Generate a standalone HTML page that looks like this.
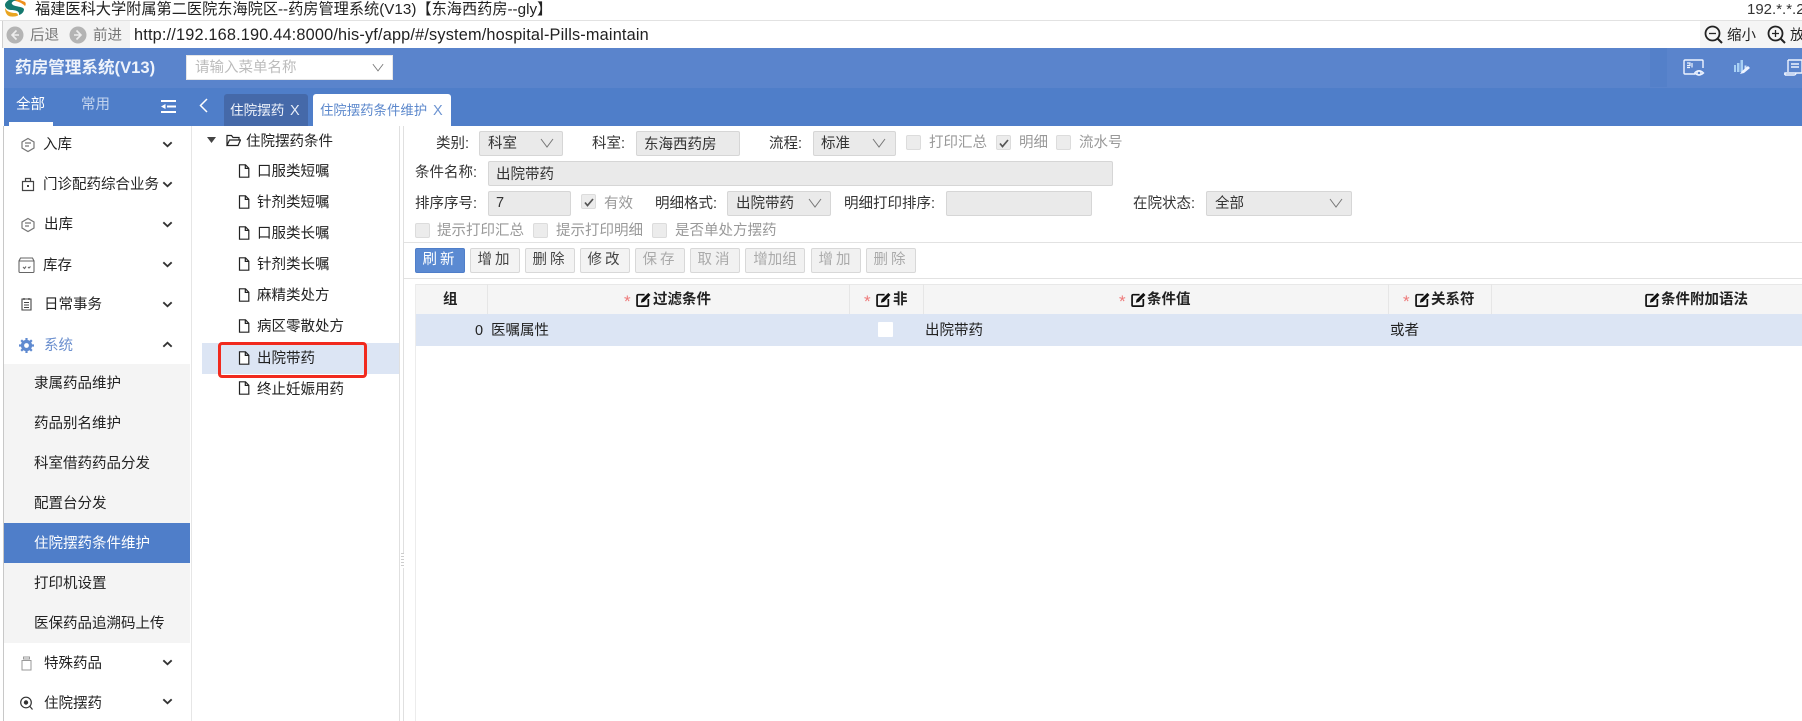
<!DOCTYPE html>
<html lang="zh"><head><meta charset="utf-8"><title>药房管理系统</title>
<style>
html,body{margin:0;padding:0;background:#fff}
body{width:1802px;height:721px;position:relative;overflow:hidden;font-family:"Liberation Sans","Noto Sans CJK SC",sans-serif;color:#333;font-size:14.5px}
.a,.t,.b,svg.i{position:absolute}
.t{white-space:nowrap;line-height:20px;height:20px;margin-top:1px}
.in{position:absolute;background:#eaeaea;border:1px solid #d6d6d6;border-radius:2px;box-sizing:border-box;height:25px}
.ck{position:absolute;width:15px;height:15px;background:#ececec;border:1px solid #dcdcdc;border-radius:2px;box-sizing:border-box}
.b{top:248px;height:25px;width:50px;box-sizing:border-box;background:#f3f3f3;border:1px solid #d8d8d8;border-radius:2px;text-align:center;line-height:23px;font-size:14.5px;letter-spacing:3px;color:#444}
.b.d{color:#aaa;background:#f1f1f1}
.g{color:#999}
.k{color:#222}
.h{font-weight:bold;color:#222}
.s{color:#ee7a7a;font-size:17px}
</style></head><body>
<svg width="0" height="0" style="position:absolute">
<symbol id="doc" viewBox="0 0 12 14"><path d="M1.5 .8H7.5L10.8 4.2V13.2H1.5Z M7.3 .8V4.4H10.8" fill="#fff" stroke="#222" stroke-width="1.2"/></symbol>
<symbol id="chev" viewBox="0 0 10 6"><path d="M1.2 1L5 4.6 8.8 1" fill="none" stroke="#333" stroke-width="1.7"/></symbol>
<symbol id="sel" viewBox="0 0 14 10"><path d="M1 1L7 9 13 1" fill="none" stroke="#777" stroke-width="1"/></symbol>
<symbol id="ed" viewBox="0 0 14 14"><path d="M11.500 6.500V12.200a1 1 0 0 1-1 1H2a1 1 0 0 1-1-1V3.500a1 1 0 0 1 1-1H8" fill="none" stroke="#111" stroke-width="1.600"/><path d="M4.500 10L5.200 7 11.500 .8 13.500 2.800 7.400 9.200Z" fill="#111"/></symbol>
<symbol id="cube" viewBox="0 0 16 16"><path d="M8 1.500L14 5V11L8 14.500 2 11V5Z M5 6H11M5 9H9" fill="none" stroke="#777" stroke-width="1.200"/></symbol>
</svg>

<!-- title bar -->
<svg class="i" style="left:2px;top:0" width="25" height="18" viewBox="0 0 25 18"><path d="M8 0H18L23 2C24 3 24 5 23 6 20 3 16 1 8 0Z" fill="#ee8f1c"/><path d="M7 0H15C11 1 9 2.500 10 4 12 7 20 6 22 9 22 12 20 14 17 15 18 11 13 10 9 10 6 10 3 8 3 5 3 3 5 1 7 0Z" fill="#15796f"/><path d="M3 8C5 12 10 13 13 13 15 13 16 14 16 15.500 13 17 8 17 6 15.500 4 14 3 11 3 8Z" fill="#e9a522"/></svg>
<div class="t k" style="left:35px;top:-1px;font-size:15.200px">福建医科大学附属第二医院东海院区--药房管理系统(V13)【东海西药房--gly】</div>
<div class="t k" style="left:1747px;top:-1px;font-size:15px;color:#333">192.*.*.2</div>
<div class="a" style="left:0;top:20px;width:1802px;height:1px;background:#e2e2e2"></div>

<!-- address bar -->
<div class="a" style="left:3px;top:21px;width:127px;height:27px;background:#f3f3f3"></div>
<div class="a" style="left:2px;top:21px;width:1px;height:27px;background:#d0d0d0"></div>
<svg class="i" style="left:6px;top:26px" width="18" height="18" viewBox="0 0 18 18"><circle cx="9" cy="9" r="8.500" fill="#b4b4b4"/><path d="M10.500 4.500L6 9l4.500 4.500M6 9h7" fill="none" stroke="#eee" stroke-width="1.600"/></svg>
<div class="t g" style="left:30px;top:25px;font-size:14.500px;color:#777">后退</div>
<svg class="i" style="left:69px;top:26px" width="18" height="18" viewBox="0 0 18 18"><circle cx="9" cy="9" r="8.500" fill="#b4b4b4"/><path d="M7.500 4.500L12 9l-4.500 4.500M12 9H5" fill="none" stroke="#eee" stroke-width="1.600"/></svg>
<div class="t g" style="left:93px;top:25px;font-size:14.500px;color:#777">前进</div>
<div class="t k" style="left:134px;top:24px;font-size:16.300px;letter-spacing:.18px">http://192.168.190.44:8000/his-yf/app/#/system/hospital-Pills-maintain</div>
<div class="a" style="left:1700px;top:21px;width:102px;height:27px;background:#f5f5f5"></div>
<svg class="i" style="left:1704px;top:25px" width="19" height="19" viewBox="0 0 19 19"><circle cx="8.500" cy="8.500" r="7" fill="none" stroke="#222" stroke-width="1.800"/><path d="M13.500 13.500L18 18" stroke="#222" stroke-width="2"/><path d="M5 8.500h7" stroke="#222" stroke-width="1.300"/></svg>
<div class="t k" style="left:1727px;top:25px;font-size:14.500px">缩小</div>
<svg class="i" style="left:1767px;top:25px" width="19" height="19" viewBox="0 0 19 19"><circle cx="8.500" cy="8.500" r="7" fill="none" stroke="#222" stroke-width="1.800"/><path d="M13.500 13.500L18 18" stroke="#222" stroke-width="2"/><path d="M5 8.500h7M8.500 5v7" stroke="#222" stroke-width="1.300"/></svg>
<div class="t k" style="left:1790px;top:25px;font-size:14.500px">放大</div>

<!-- header -->
<div class="a" style="left:4px;top:48px;width:1798px;height:40px;background:#5a84cc"></div>
<div class="t" style="left:15px;top:57px;color:#eef3fb;font-weight:bold;font-size:16.600px">药房管理系统(V13)</div>
<div class="a" style="left:186px;top:55px;width:207px;height:25px;background:#fff;border:1px solid #e6e6e6;box-sizing:border-box"></div>
<div class="t" style="left:195px;top:57px;color:#bcbcbc;font-size:14.500px">请输入菜单名称</div>
<svg class="i" style="left:372px;top:63px" width="12" height="9"><use href="#sel"/></svg>
<div class="a" style="left:1650px;top:48px;width:17px;height:39px;background:#5480c9"></div>
<svg class="i" style="left:1683px;top:59px" width="22" height="18" viewBox="0 0 22 18" fill="none" stroke="#eef4ff" stroke-width="1.400"><path d="M12 15H2a1 1 0 0 1-1-1V2a1 1 0 0 1 1-1h17a1 1 0 0 1 1 1V9"/><circle cx="16" cy="14" r="2"/><path d="M11.500 14Q16 9.500 20.500 14Q16 18 11.500 14"/><path d="M4 8.500h3M4 4h3v2.500H4M9 4v4.500" stroke-width="1.200"/></svg>
<svg class="i" style="left:1733px;top:59px" width="18" height="18" viewBox="0 0 18 18"><path d="M1 6h2v7H1zM4 4h2.500v9H4zM7.500 1h2.500v12H7.500z" fill="#a8d0f4"/><path d="M11.500 6.500h2v5h-2z" fill="#cfe4fa"/><path d="M7 15l2-3 6-5 2 2-6 5z" fill="#eef4ff"/></svg>
<svg class="i" style="left:1784px;top:59px" width="18" height="18" viewBox="0 0 18 18" fill="none" stroke="#eef4ff" stroke-width="1.400"><path d="M4 1h14v13H1v2M1 16h9a2 2 0 0 0 2-2H1a2 2 0 0 0 0 2M4 1v12M7 5h8M7 8h8"/></svg>

<!-- second row -->
<div class="a" style="left:4px;top:88px;width:1798px;height:38px;background:#4f7ec9"></div>
<div class="t" style="left:16px;top:94px;color:#fff;font-size:14.500px">全部</div>
<div class="t" style="left:81px;top:94px;color:#c3d4ee;font-size:14.500px">常用</div>
<div class="a" style="left:9px;top:122px;width:44px;height:4px;background:#fff"></div>
<svg class="i" style="left:161px;top:100px" width="16" height="13" viewBox="0 0 16 13" fill="#fff"><path d="M0 0h15v2H0zM6 5.500h9v2H6zM0 11h15v2H0zM4.500 4v5L0 6.500z"/></svg>
<svg class="i" style="left:198px;top:97px" width="11" height="17" viewBox="0 0 11 17"><path d="M9 2L2.500 8.500 9 15" fill="none" stroke="#fff" stroke-width="1.500"/></svg>
<div class="a" style="left:224px;top:94px;width:84px;height:32px;background:#4569a9;border-radius:3px 3px 0 0"></div>
<div class="t" style="left:230px;top:100px;color:#f0f4fb;font-size:13.600px">住院摆药</div>
<div class="t" style="left:290px;top:100px;color:#e6edf8;font-size:14.500px">X</div>
<div class="a" style="left:313px;top:94px;width:138px;height:32px;background:#fff;border-radius:3px 3px 0 0"></div>
<div class="t" style="left:320px;top:100px;color:#5c88cc;font-size:13.400px">住院摆药条件维护</div>
<div class="t" style="left:433px;top:100px;color:#6d94d1;font-size:14.500px">X</div>

<!-- sidebar -->
<div class="a" style="left:3px;top:126px;width:1px;height:595px;background:#c8c8c8"></div>
<div class="a" style="left:191px;top:126px;width:1px;height:595px;background:#e6e6e6"></div>
<div class="a" style="left:4px;top:364px;width:186px;height:279px;background:#f4f4f4"></div>
<div class="a" style="left:4px;top:523px;width:186px;height:40px;background:#4f7ec9"></div>

<svg class="i" style="left:20px;top:137px" width="16" height="16"><use href="#cube"/></svg>
<div class="t k" style="left:43px;top:134px">入库</div>
<svg class="i" style="left:162px;top:141px" width="11" height="7"><use href="#chev"/></svg>
<svg class="i" style="left:21px;top:177px" width="14" height="15" viewBox="0 0 14 15"><path d="M1.500 4.500h11v9h-11zM4.500 4.500V1.500h5v3" fill="none" stroke="#444" stroke-width="1.200"/><path d="M6 8h2v2H6z" fill="#444"/></svg>
<div class="t k" style="left:43px;top:174px">门诊配药综合业务</div>
<svg class="i" style="left:162px;top:181px" width="11" height="7"><use href="#chev"/></svg>
<svg class="i" style="left:20px;top:217px" width="16" height="16"><use href="#cube"/></svg>
<div class="t k" style="left:44px;top:214px">出库</div>
<svg class="i" style="left:162px;top:221px" width="11" height="7"><use href="#chev"/></svg>
<svg class="i" style="left:18px;top:257px" width="17" height="16" viewBox="0 0 17 16"><path d="M1 4h15v10.500a1 1 0 0 1-1 1H2a1 1 0 0 1-1-1zM1 4l1.500-3h12L16 4M5 10l1.500 1.500L8 9.500M10 10l1 1 1.500-1.500" fill="none" stroke="#666" stroke-width="1.100"/></svg>
<div class="t k" style="left:43px;top:255px">库存</div>
<svg class="i" style="left:162px;top:261px" width="11" height="7"><use href="#chev"/></svg>
<svg class="i" style="left:21px;top:297px" width="11" height="14" viewBox="0 0 11 14"><path d="M1 2h9v11H1zM3 1v2M8 1v2M3 5.500h5M3 8h5M3 10.500h5" fill="none" stroke="#444" stroke-width="1.100"/></svg>
<div class="t k" style="left:44px;top:294px">日常事务</div>
<svg class="i" style="left:162px;top:301px" width="11" height="7"><use href="#chev"/></svg>
<svg class="i" style="left:19px;top:338px" width="15" height="15" viewBox="0 0 15 15"><circle cx="7.500" cy="7.500" r="4" fill="none" stroke="#5f8ad0" stroke-width="3.200"/><path d="M7.500 0v3M7.500 12v3M0 7.500h3M12 7.500h3M2.200 2.200l2 2M10.800 10.800l2 2M2.200 12.800l2-2M10.800 4.200l2-2" stroke="#5f8ad0" stroke-width="2.200"/></svg>
<div class="t" style="left:44px;top:335px;color:#6c90cf">系统</div>
<svg class="i" style="left:162px;top:341px;transform:scaleY(-1)" width="11" height="7"><use href="#chev"/></svg>

<div class="t k" style="left:34px;top:373px">隶属药品维护</div>
<div class="t k" style="left:34px;top:413px">药品别名维护</div>
<div class="t k" style="left:34px;top:453px">科室借药药品分发</div>
<div class="t k" style="left:34px;top:493px">配置台分发</div>
<div class="t" style="left:34px;top:533px;color:#fff">住院摆药条件维护</div>
<div class="t k" style="left:34px;top:573px">打印机设置</div>
<div class="t k" style="left:34px;top:613px">医保药品追溯码上传</div>

<svg class="i" style="left:21px;top:656px" width="11" height="15" viewBox="0 0 11 15"><path d="M2.500 1h6v2h-6zM1 4.500h9V14H1z" fill="none" stroke="#999" stroke-width="1"/></svg>
<div class="t k" style="left:44px;top:653px">特殊药品</div>
<svg class="i" style="left:162px;top:659px" width="11" height="7"><use href="#chev"/></svg>
<svg class="i" style="left:20px;top:696px" width="13" height="14" viewBox="0 0 13 14"><circle cx="6" cy="6.500" r="5.300" fill="none" stroke="#333" stroke-width="1.200"/><circle cx="6" cy="6.500" r="2.200" fill="#333"/><path d="M10 10.500l2.500 3" stroke="#333" stroke-width="1.200"/></svg>
<div class="t k" style="left:44px;top:693px">住院摆药</div>
<svg class="i" style="left:162px;top:698px" width="11" height="7"><use href="#chev"/></svg>

<!-- tree -->
<div class="a" style="left:399px;top:126px;width:1px;height:595px;background:#e0e0e0"></div>
<div class="a" style="left:403px;top:126px;width:1px;height:595px;background:#e0e0e0"></div>
<div class="a" style="left:400.500px;top:553px;width:3px;height:15px;background:repeating-linear-gradient(#ccc 0 1px,#fff 1px 3px)"></div>
<svg class="i" style="left:207px;top:137px" width="9" height="6"><path d="M0 0h9L4.500 6z" fill="#444"/></svg>
<svg class="i" style="left:226px;top:134px" width="15" height="13" viewBox="0 0 15 13"><path d="M1 11.500V1.500h4.500l1.500 2h6v2.500M1 11.500l2.500-5.500h11L12 11.500z" fill="none" stroke="#222" stroke-width="1.200"/></svg>
<div class="t k" style="left:246px;top:131px">住院摆药条件</div>

<div class="a" style="left:202px;top:343px;width:197px;height:31px;background:#dce5f4"></div>
<svg class="i" style="left:238px;top:164px" width="12" height="14"><use href="#doc"/></svg><div class="t k" style="left:257px;top:161px">口服类短嘱</div>
<svg class="i" style="left:238px;top:195px" width="12" height="14"><use href="#doc"/></svg><div class="t k" style="left:257px;top:192px">针剂类短嘱</div>
<svg class="i" style="left:238px;top:226px" width="12" height="14"><use href="#doc"/></svg><div class="t k" style="left:257px;top:223px">口服类长嘱</div>
<svg class="i" style="left:238px;top:257px" width="12" height="14"><use href="#doc"/></svg><div class="t k" style="left:257px;top:254px">针剂类长嘱</div>
<svg class="i" style="left:238px;top:288px" width="12" height="14"><use href="#doc"/></svg><div class="t k" style="left:257px;top:285px">麻精类处方</div>
<svg class="i" style="left:238px;top:319px" width="12" height="14"><use href="#doc"/></svg><div class="t k" style="left:257px;top:316px">病区零散处方</div>
<svg class="i" style="left:238px;top:351px" width="12" height="14"><use href="#doc"/></svg><div class="t k" style="left:257px;top:348px">出院带药</div>
<svg class="i" style="left:238px;top:381px" width="12" height="14"><use href="#doc"/></svg><div class="t k" style="left:257px;top:379px">终止妊娠用药</div>
<div class="a" style="left:218px;top:342px;width:149px;height:36px;border:3.500px solid #f12a1e;border-radius:4px;box-sizing:border-box"></div>

<!-- form -->
<div class="t" style="left:436px;top:133px">类别:</div>
<div class="in" style="left:479px;top:131px;width:84px"></div><div class="t" style="left:488px;top:133px">科室</div>
<svg class="i" style="left:540px;top:138px" width="14" height="10"><use href="#sel"/></svg>
<div class="t" style="left:592px;top:133px">科室:</div>
<div class="in" style="left:636px;top:131px;width:104px"></div><div class="t" style="left:644px;top:134px">东海西药房</div>
<div class="t" style="left:769px;top:133px">流程:</div>
<div class="in" style="left:813px;top:131px;width:83px"></div><div class="t" style="left:821px;top:133px">标准</div>
<svg class="i" style="left:872px;top:138px" width="14" height="10"><use href="#sel"/></svg>
<div class="ck" style="left:906px;top:135px"></div><div class="t g" style="left:929px;top:132px">打印汇总</div>
<div class="ck" style="left:996px;top:135px"></div><svg class="i" style="left:999px;top:139px" width="10" height="9"><path d="M1 4.500L3.500 7.500 9 1" fill="none" stroke="#555" stroke-width="1.700"/></svg><div class="t g" style="left:1019px;top:132px">明细</div>
<div class="ck" style="left:1056px;top:135px"></div><div class="t g" style="left:1079px;top:132px">流水号</div>

<div class="t" style="left:415px;top:162px">条件名称:</div>
<div class="in" style="left:488px;top:161px;width:625px"></div><div class="t" style="left:496px;top:164px">出院带药</div>

<div class="t" style="left:415px;top:193px">排序序号:</div>
<div class="in" style="left:488px;top:191px;width:83px"></div><div class="t" style="left:496px;top:192px">7</div>
<div class="ck" style="left:581px;top:194px"></div><svg class="i" style="left:584px;top:198px" width="10" height="9"><path d="M1 4.500L3.500 7.500 9 1" fill="none" stroke="#555" stroke-width="1.700"/></svg><div class="t g" style="left:604px;top:193px">有效</div>
<div class="t" style="left:655px;top:193px">明细格式:</div>
<div class="in" style="left:727px;top:191px;width:104px"></div><div class="t" style="left:736px;top:193px">出院带药</div>
<svg class="i" style="left:808px;top:198px" width="14" height="10"><use href="#sel"/></svg>
<div class="t" style="left:844px;top:193px">明细打印排序:</div>
<div class="in" style="left:946px;top:191px;width:146px"></div>
<div class="t" style="left:1133px;top:193px">在院状态:</div>
<div class="in" style="left:1206px;top:191px;width:146px"></div><div class="t" style="left:1215px;top:193px">全部</div>
<svg class="i" style="left:1329px;top:198px" width="14" height="10"><use href="#sel"/></svg>

<div class="ck" style="left:415px;top:223px"></div><div class="t g" style="left:437px;top:220px">提示打印汇总</div>
<div class="ck" style="left:533px;top:223px"></div><div class="t g" style="left:556px;top:220px">提示打印明细</div>
<div class="ck" style="left:652px;top:223px"></div><div class="t g" style="left:675px;top:220px">是否单处方摆药</div>

<div class="a" style="left:404px;top:242px;width:1398px;height:1px;background:#e2e2e2"></div>
<div class="b" style="left:415px;background:#5b8ad2;border-color:#4f7ec9;color:#fff">刷新</div>
<div class="b" style="left:470px">增加</div>
<div class="b" style="left:525px">删除</div>
<div class="b" style="left:580px">修改</div>
<div class="b d" style="left:635px">保存</div>
<div class="b d" style="left:690px">取消</div>
<div class="b d" style="left:745px;width:60px;letter-spacing:0">增加组</div>
<div class="b d" style="left:811px">增加</div>
<div class="b d" style="left:866px">删除</div>
<div class="a" style="left:404px;top:278px;width:1398px;height:1px;background:#e2e2e2"></div>

<!-- table -->
<div class="a" style="left:415px;top:284px;width:1387px;height:30px;background:#f5f5f5;border-top:1px solid #e8e8e8;box-sizing:border-box"></div>
<div class="a" style="left:415px;top:284px;width:1px;height:437px;background:#ececec"></div>
<div class="a" style="left:487px;top:284px;width:1px;height:30px;background:#e6e6e6"></div>
<div class="a" style="left:849px;top:284px;width:1px;height:30px;background:#e6e6e6"></div>
<div class="a" style="left:923px;top:284px;width:1px;height:30px;background:#e6e6e6"></div>
<div class="a" style="left:1388px;top:284px;width:1px;height:30px;background:#e6e6e6"></div>
<div class="a" style="left:1491px;top:284px;width:1px;height:30px;background:#e6e6e6"></div>
<div class="a" style="left:416px;top:314px;width:1386px;height:32px;background:#dce5f4"></div>

<div class="t h" style="left:443px;top:289px">组</div>
<div class="t s" style="left:624px;top:291px">*</div><svg class="i" style="left:636px;top:292px" width="15" height="15"><use href="#ed"/></svg><div class="t h" style="left:653px;top:289px">过滤条件</div>
<div class="t s" style="left:864px;top:291px">*</div><svg class="i" style="left:876px;top:292px" width="15" height="15"><use href="#ed"/></svg><div class="t h" style="left:893px;top:289px">非</div>
<div class="t s" style="left:1119px;top:291px">*</div><svg class="i" style="left:1131px;top:292px" width="15" height="15"><use href="#ed"/></svg><div class="t h" style="left:1147px;top:289px">条件值</div>
<div class="t s" style="left:1403px;top:291px">*</div><svg class="i" style="left:1415px;top:292px" width="15" height="15"><use href="#ed"/></svg><div class="t h" style="left:1431px;top:289px">关系符</div>
<svg class="i" style="left:1645px;top:292px" width="15" height="15"><use href="#ed"/></svg><div class="t h" style="left:1661px;top:289px">条件附加语法</div>

<div class="t k" style="left:475px;top:320px">0</div>
<div class="t k" style="left:491px;top:320px">医嘱属性</div>
<div class="a" style="left:878px;top:322px;width:15px;height:15px;background:#fff;border-radius:1px"></div>
<div class="t k" style="left:925px;top:320px">出院带药</div>
<div class="t k" style="left:1390px;top:320px">或者</div>
</body></html>
